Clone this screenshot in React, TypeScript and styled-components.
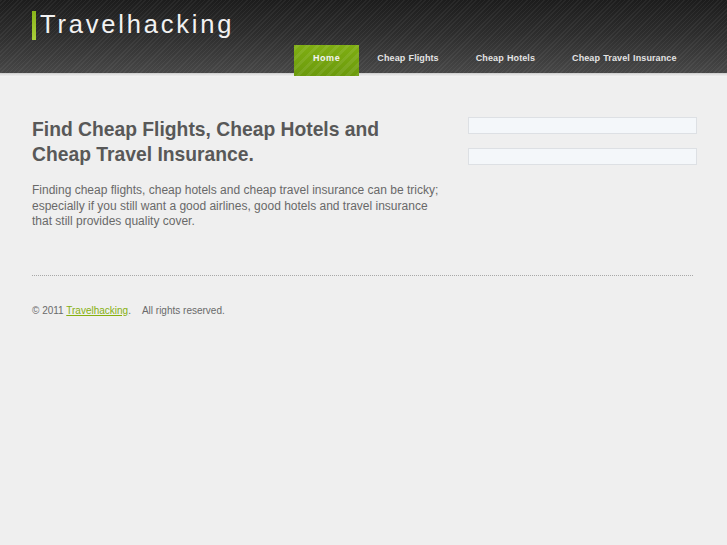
import React from "react";
import styled, { createGlobalStyle } from "styled-components";

const Global = createGlobalStyle`
  html, body { margin: 0; padding: 0; }
  body {
    background: #efefef;
    font-family: "Liberation Sans", Arial, Helvetica, sans-serif;
    color: #666;
  }
`;

const Header = styled.header`
  height: 77px;
  background:
    repeating-linear-gradient(-45deg, rgba(255,255,255,0.05) 0 1px, rgba(0,0,0,0) 1px 3px),
    linear-gradient(to bottom, #1c1c1c 0px, #2e2e2e 35px, #474747 73px, #c4c4c4 73px, #dcdcdc 74px, #ececec 76px, #f6f6f6 77px);
`;

const HeaderInner = styled.div`
  width: 665px;
  height: 100%;
  margin-left: 32px;
  display: flex;
  flex-direction: column;
`;

const Logo = styled.div`
  display: flex;
  align-items: center;
  gap: 5px;
  margin-top: 11px;
  height: 29px;
`;

const LogoBar = styled.span`
  width: 4px;
  height: 29px;
  background: linear-gradient(to bottom, #8ab41a, #a9cf3a);
`;

const LogoText = styled.span`
  font-size: 25.5px;
  letter-spacing: 2.8px;
  color: #f2f2f2;
  line-height: 29px;
  margin-top: -2px;
  margin-left: -1px;
`;

const Nav = styled.nav`
  margin-top: auto;
  margin-bottom: 1px;
  margin-right: 2px;
  display: flex;
  justify-content: flex-end;
`;

const NavItem = styled.a<{ $active?: boolean }>`
  height: 31px;
  display: flex;
  align-items: center;
  padding: 0 18.5px 5px;
  font-size: 9px;
  font-weight: bold;
  letter-spacing: ${(p) => (p.$active ? "0.6px" : "0.1px")};
  word-spacing: 0.6px;
  color: ${(p) => (p.$active ? "#f4f4f4" : "#e4e4e4")};
  text-decoration: none;
  box-sizing: border-box;
  background: ${(p) =>
    p.$active
      ? "repeating-linear-gradient(-45deg, rgba(255,255,255,0.08) 0 3px, rgba(0,0,0,0) 3px 7px), linear-gradient(to bottom, #7fae12, #6b9a0c)"
      : "transparent"};
`;

const Main = styled.main`
  width: 665px;
  margin-left: 32px;
  padding-top: 40px;
`;

const Columns = styled.div`
  display: grid;
  grid-template-columns: 410px 229px;
  column-gap: 26px;
  align-items: start;
`;

const Heading = styled.h1`
  margin: 0;
  font-size: 19.3px;
  line-height: 25px;
  font-weight: bold;
  color: #585858;
`;

const Text = styled.p`
  margin: 16px 0 0;
  font-size: 12px;
  line-height: 15.5px;
  color: #696969;
`;

const Side = styled.aside`
  display: flex;
  flex-direction: column;
  gap: 14px;
`;

const SideBox = styled.div`
  height: 17px;
  box-sizing: border-box;
  background: #f4f7fa;
  border: 1px solid #dde0e4;
`;

const Divider = styled.hr`
  margin: 45px 0 0;
  border: 0;
  border-top: 1px dotted #a8a8a8;
  width: 661px;
  height: 0;
`;

const Footer = styled.footer`
  margin-top: 28px;
  font-size: 10px;
  line-height: 14px;
  color: #6a6a6a;
`;

const FooterLink = styled.a`
  color: #86b00f;
  text-decoration: underline;
`;

const Rights = styled.span`
  margin-left: 11px;
`;

export default function App() {
  return (
    <>
      <Global />
      <Header>
        <HeaderInner>
          <Logo>
            <LogoBar />
            <LogoText>Travelhacking</LogoText>
          </Logo>
          <Nav>
            <NavItem $active href="#">Home</NavItem>
            <NavItem href="#">Cheap Flights</NavItem>
            <NavItem href="#">Cheap Hotels</NavItem>
            <NavItem href="#">Cheap Travel Insurance</NavItem>
          </Nav>
        </HeaderInner>
      </Header>
      <Main>
        <Columns>
          <div>
            <Heading>Find Cheap Flights, Cheap Hotels and Cheap Travel Insurance.</Heading>
            <Text>
              Finding cheap flights, cheap hotels and cheap travel insurance can be tricky;
              especially if you still want a good airlines, good hotels and travel insurance
              that still provides quality cover.
            </Text>
          </div>
          <Side>
            <SideBox />
            <SideBox />
          </Side>
        </Columns>
        <Divider />
        <Footer>
          © 2011 <FooterLink href="#">Travelhacking</FooterLink>.<Rights>All rights reserved.</Rights>
        </Footer>
      </Main>
    </>
  );
}
